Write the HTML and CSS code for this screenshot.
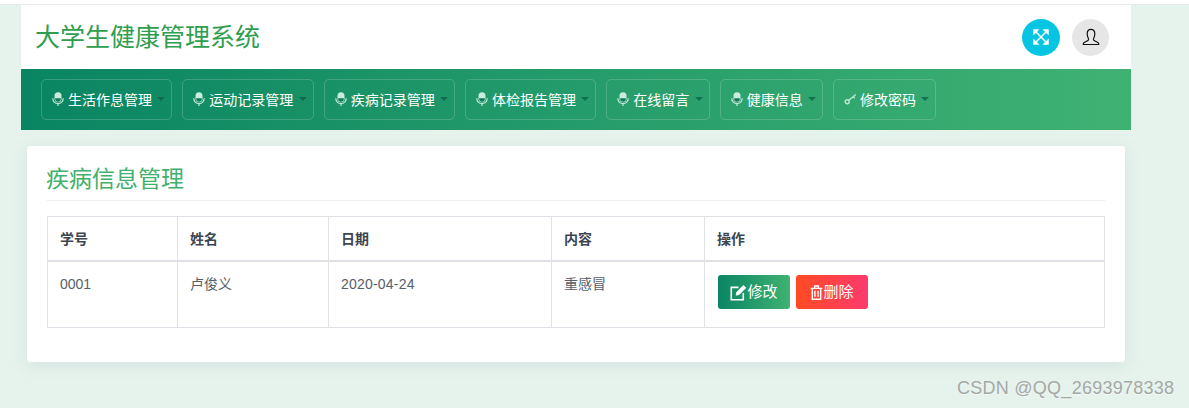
FILE: index.html
```html
<!DOCTYPE html>
<html lang="zh">
<head>
<meta charset="utf-8">
<title>疾病信息管理</title>
<link rel="stylesheet" href="styles.css">
</head>
<body>
<div class="topline"></div>
<div class="shell">
  <header class="brandbar">
    <h1 class="brand">大学生健康管理系统</h1>
    <div class="tools">
      <span class="tool tool-full">
        <svg viewBox="0 0 18 18" width="18" height="18" fill="#fff" stroke="#fff"><path d="M3 3l12 12M15 3L3 15" stroke-width="1.500" fill="none"/><path d="M1.500 1.500H7L5.300 3.200 3.200 5.300 1.500 7zM16.500 1.500V7L14.800 5.300 12.700 3.200 11 1.500zM1.500 16.500V11l1.700 1.700 2.100 2.100L7 16.500zM16.500 16.500H11l1.700-1.700 2.100-2.100L16.500 11z" stroke-width=".5"/></svg>
      </span>
      <span class="tool tool-user">
        <svg viewBox="0 0 18 18" width="18" height="18" fill="none" stroke="#111" stroke-width="1.200"><path d="M1.300 16.500h15.400v-1c0-1.500-4-2.200-5-3.400-.5-.7-.3-1.300.1-2.200.6-1.200 1-2.700 1-4.200C12.800 3 11.300 1.300 9 1.300S5.200 3 5.200 5.700c0 1.500.4 3 1 4.200.4.900.6 1.500.1 2.200-1 1.200-5 1.900-5 3.400z"/></svg>
      </span>
    </div>
  </header>
  <nav class="menu">
    <a class="menu-item"><svg class="mic" viewBox="0 0 12 14"><use href="#mic"/></svg>生活作息管理<i class="caret"></i></a>
    <a class="menu-item"><svg class="mic" viewBox="0 0 12 14"><use href="#mic"/></svg>运动记录管理<i class="caret"></i></a>
    <a class="menu-item"><svg class="mic" viewBox="0 0 12 14"><use href="#mic"/></svg>疾病记录管理<i class="caret"></i></a>
    <a class="menu-item"><svg class="mic" viewBox="0 0 12 14"><use href="#mic"/></svg>体检报告管理<i class="caret"></i></a>
    <a class="menu-item"><svg class="mic" viewBox="0 0 12 14"><use href="#mic"/></svg>在线留言<i class="caret"></i></a>
    <a class="menu-item"><svg class="mic" viewBox="0 0 12 14"><use href="#mic"/></svg>健康信息<i class="caret"></i></a>
    <a class="menu-item"><svg class="key" viewBox="0 0 13 12" fill="none" stroke="#bfe8d6" stroke-width="1.400"><circle cx="3.200" cy="8.800" r="2"/><path d="M4.800 7.300 11.800 1.500M9.200 3.600l1.500 1.700"/></svg>修改密码<i class="caret"></i></a>
  </nav>
  <main class="card">
    <h2 class="card-title">疾病信息管理</h2>
    <table class="data">
      <colgroup>
        <col class="c1"><col class="c2"><col class="c3"><col class="c4"><col class="c5">
      </colgroup>
      <thead>
        <tr><th>学号</th><th>姓名</th><th>日期</th><th>内容</th><th>操作</th></tr>
      </thead>
      <tbody>
        <tr>
          <td>0001</td>
          <td>卢俊义</td>
          <td class="date">2020-04-24</td>
          <td>重感冒</td>
          <td class="actions">
            <div class="btns">
              <a class="btn btn-edit"><svg viewBox="0 0 16 16" width="17" height="17" fill="none" stroke="#fff" stroke-width="1.500"><path d="M12.500 8.500V14.800H1.200V3.200H8"/><path d="M5.800 10.500l.6-2.800L12.600 1.300l2.300 2.300-6.300 6.300z" fill="#fff" stroke-width=".8"/></svg>修改</a>
              <a class="btn btn-del"><svg viewBox="0 0 14 16" width="13" height="15" fill="none" stroke="#fff" stroke-width="1.500"><path d="M.8 3.500h12.400M5 3.500V1h4v2.500M2.500 3.500v11.700h9V3.500M5.300 6v6.500M8.700 6v6.500"/></svg>删除</a>
            </div>
          </td>
        </tr>
      </tbody>
    </table>
  </main>
</div>
<div class="watermark">CSDN @QQ_2693978338</div>
<svg class="defs" width="0" height="0" aria-hidden="true">
  <symbol id="mic" viewBox="0 0 12 14">
    <rect x="2.500" y="0.300" width="7" height="10" rx="3.500" fill="#c9ecdc"/>
    <path d="M3.200 6.300h5.600v.7a2.800 2.800 0 0 1-5.600 0z" fill="#0f7a58"/>
    <path d="M.8 6.200c0 3.300 2.300 5.300 5.200 5.300s5.200-2 5.200-5.300M6 11.500V14" fill="none" stroke="#c9ecdc" stroke-width="1.200"/>
  </symbol>
</svg>
</body>
</html>
```
FILE: styles.css
```css
* { box-sizing: border-box; }
html, body { margin: 0; padding: 0; }
body {
  position: relative;
  height: 408px;
  overflow: hidden;
  background: #e6f3ec;
  font-family: "Liberation Sans", "Noto Sans CJK SC", sans-serif;
  color: #4a5560;
}
.topline {
  height: 5px;
  background: #fff;
  border-bottom: 1px solid #e7e9ee;
}
.shell {
  width: 1110px;
  margin-left: 21px;
}
.brandbar {
  height: 64px;
  background: #fff;
  display: flex;
  align-items: center;
  justify-content: space-between;
  padding: 0 22px 0 14px;
}
.brand {
  margin: 0;
  font-size: 25px;
  font-weight: 400;
  line-height: 1;
  color: #2f9e4f;
}
.tools { display: flex; align-items: center; gap: 12px; }
.tool {
  display: flex;
  align-items: center;
  justify-content: center;
  border-radius: 50%;
}
.tool-full { width: 38px; height: 37px; background: #06c5e2; }
.tool-user { width: 37px; height: 37px; background: #e6e6e6; }
.menu {
  height: 61px;
  background: linear-gradient(90deg, #0a8562, #3fb273);
  display: flex;
  align-items: center;
  gap: 10px;
  padding: 0 20px;
}
.menu-item {
  height: 41px;
  display: flex;
  align-items: center;
  padding: 0 6px 2px 10px;
  border: 1px solid rgba(255, 255, 255, .18);
  border-radius: 5px;
  color: #fff;
  font-size: 14px;
  white-space: nowrap;
}
.mic { width: 12px; height: 14px; margin-right: 4px; }
.key { width: 13px; height: 12px; margin-right: 3px; }
.caret {
  width: 0;
  height: 0;
  margin-left: 5.330px;
  border-left: 4px solid transparent;
  border-right: 4px solid transparent;
  border-top: 4px solid #0b5f46;
  opacity: .75;
}
.card {
  width: 1098px;
  height: 216px;
  margin: 16px 0 0 6px;
  padding: 20px;
  background: #fff;
  border-radius: 3px;
  box-shadow: 0 3px 16px rgba(120, 140, 180, .16);
}
.card-title {
  margin: 0 0 15px;
  height: 35px;
  font-size: 23px;
  font-weight: 400;
  line-height: 26px;
  text-indent: -1px;
  color: #41b06e;
  border-bottom: 1px solid #eceef0;
}
.data {
  width: 1057px;
  table-layout: fixed;
  border-collapse: collapse;
  font-size: 14px;
}
.c1 { width: 130px; }
.c2 { width: 151px; }
.c3 { width: 223px; }
.c4 { width: 153px; }
.c5 { width: 400px; }
.data th, .data td {
  border: 1px solid #dfe1e6;
  padding: 12px;
  text-align: left;
  vertical-align: top;
  line-height: 20px;
}
.data th { font-weight: 700; height: 43px; padding-bottom: 11px; border-bottom-width: 2px; color: #3d4650; }
.data td { height: 66px; color: #555e69; }
.data td.date { letter-spacing: .2px; }
.data td.actions { padding: 13px 12px 0 13px; }
.btns { display: flex; gap: 6px; }
.btn {
  display: flex;
  align-items: center;
  justify-content: center;
  width: 72px;
  height: 34px;
  border-radius: 3px;
  color: #fff;
  font-size: 15px;
}
.btn-edit { background: linear-gradient(90deg, #0a8562, #3fb273); }
.btn-del { background: linear-gradient(90deg, #ff4b22, #ff3a6e); }
.watermark {
  position: absolute;
  left: 957px;
  top: 378px;
  font-size: 18px;
  line-height: 21px;
  letter-spacing: .26px;
  color: #a4a8a6;
  text-shadow: 0 1px 1px rgba(255, 255, 255, .5);
}
.defs { position: absolute; }
```
